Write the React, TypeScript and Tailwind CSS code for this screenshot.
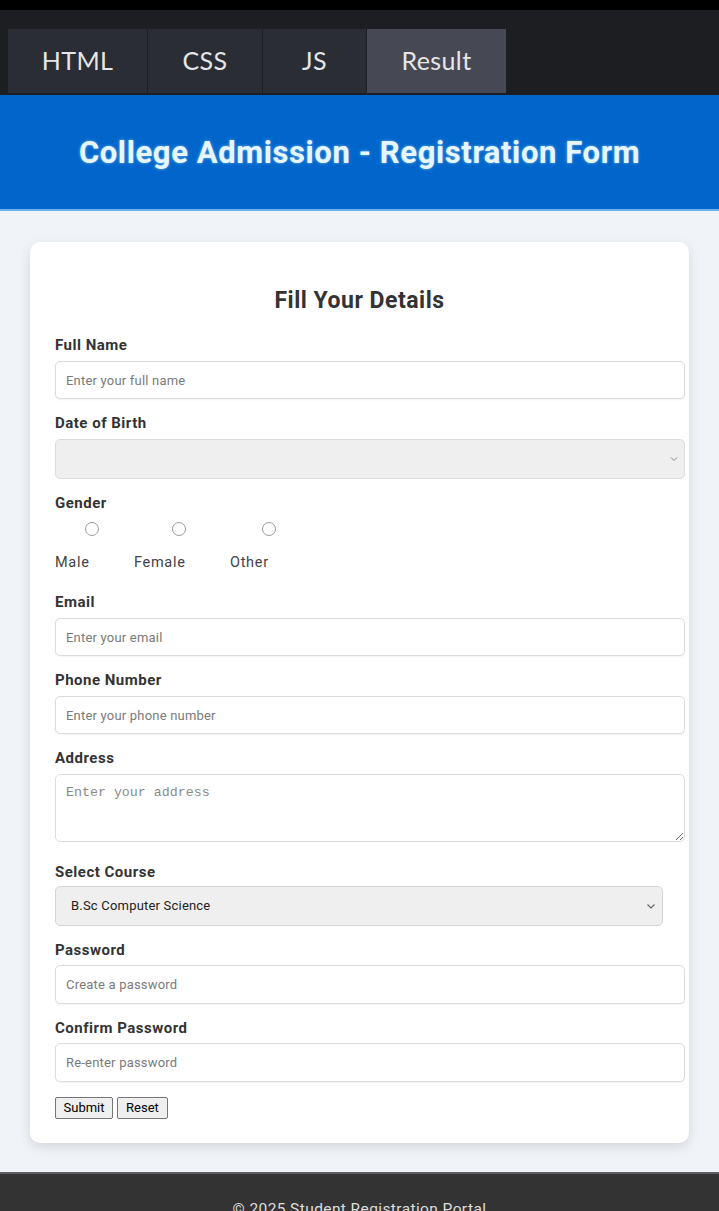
import React from "react";

const Label = ({ children, className = "" }: { children: React.ReactNode; className?: string }) => (
  <div className={`text-[15px] font-bold leading-[17px] tracking-[0.5px] text-[#333] ${className}`}>{children}</div>
);

const TextInput = ({ placeholder, className = "" }: { placeholder: string; className?: string }) => (
  <input
    type="text"
    placeholder={placeholder}
    className={`block h-[38px] w-[630px] rounded-[5px] border border-[#dcdcdc] bg-white px-[10px] text-[13px] tracking-[0.2px] text-[#333] shadow-[0_1px_2px_rgba(0,0,0,0.05)] outline-none placeholder:text-[#7a7a7a] ${className}`}
  />
);

export default function App() {
  return (
    <div className="flex min-h-[1211px] w-[719px] flex-col bg-[#f0f4f8] font-['Roboto','Liberation_Sans',sans-serif]">
      <div className="h-[10px] bg-black" />
      <div className="h-[85px] bg-[#1d1e22] pl-[8px] pt-[19px]">
        <div className="flex h-[64px] font-['Lato','Open_Sans',sans-serif] text-[25px] tracking-[0.4px] text-[#e6e6e6]">
          <div className="flex w-[140px] items-center justify-center border-r border-[#1d1e22] bg-[#2b2d35]">HTML</div>
          <div className="flex w-[115px] items-center justify-center border-r border-[#1d1e22] bg-[#2b2d35]">CSS</div>
          <div className="flex w-[104px] items-center justify-center border-r border-[#1d1e22] bg-[#2b2d35]">JS</div>
          <div className="flex w-[139px] items-center justify-center bg-[#464854]">Result</div>
        </div>
      </div>
      <div className="flex h-[116px] items-center justify-center border-b-2 border-[#6bb2ef] bg-[#0066cc] pt-[3px]">
        <h1 className="text-[31px] font-bold tracking-[0.6px] text-[#e6f6ff] [text-shadow:0_0_3px_rgba(200,240,255,0.6)]">
          College Admission - Registration Form
        </h1>
      </div>
      <div className="px-[30px] pb-[29px] pt-[31px]">
        <div className="rounded-[10px] bg-white px-[25px] pb-[24px] pt-[25px] shadow-[0_4px_12px_rgba(0,0,0,0.12)]">
          <h2 className="mt-[21px] mb-[23px] text-center text-[23px] font-bold leading-[26px] tracking-[0.5px] text-[#333]">Fill Your Details</h2>

          <Label className="mb-[7px]">Full Name</Label>
          <TextInput placeholder="Enter your full name" />

          <Label className="mb-[7px] mt-[16px]">Date of Birth</Label>
          <div className="flex h-[40px] w-[630px] items-center justify-end rounded-[5px] border border-[#dcdcdc] bg-[#efefef] pr-[6px]">
            <svg width="8" height="6" viewBox="0 0 8 6" fill="none">
              <path d="M1 1.5L4 4.5L7 1.5" stroke="#888" strokeWidth="1" />
            </svg>
          </div>

          <Label className="mt-[16px]">Gender</Label>
          <div className="mt-[10px] flex pl-[30px]">
            <div className="h-[14px] w-[14px] rounded-full border border-[#9a9a9a]" />
            <div className="ml-[73px] h-[14px] w-[14px] rounded-full border border-[#9a9a9a]" />
            <div className="ml-[76px] h-[14px] w-[14px] rounded-full border border-[#9a9a9a]" />
          </div>
          <div className="mt-[18px] flex text-[14.5px] leading-[17px] tracking-[0.7px] text-[#444]">
            <div className="w-[79px]">Male</div>
            <div className="w-[96px]">Female</div>
            <div>Other</div>
          </div>

          <Label className="mb-[7px] mt-[23px]">Email</Label>
          <TextInput placeholder="Enter your email" />

          <Label className="mb-[7px] mt-[16px]">Phone Number</Label>
          <TextInput placeholder="Enter your phone number" />

          <Label className="mb-[7px] mt-[16px]">Address</Label>
          <textarea
            placeholder="Enter your address"
            className="block h-[68px] w-[630px] resize rounded-[5px] border border-[#dcdcdc] bg-white px-[10px] pt-[10px] font-['Liberation_Mono','DejaVu_Sans_Mono',monospace] text-[13.3px] leading-[16px] text-[#333] outline-none placeholder:text-[#8a8a8a]"
          />

          <Label className="mb-[5px] mt-[22px]">Select Course</Label>
          <div className="flex h-[40px] w-[608px] items-center justify-between rounded-[5px] border border-[#d4d4d4] bg-[#efefef] pl-[15px] pr-[6px] text-[13px] tracking-[0.2px] text-[#222]">
            <span>B.Sc Computer Science</span>
            <svg width="10" height="7" viewBox="0 0 10 7" fill="none">
              <path d="M1.5 1.5L5 5L8.5 1.5" stroke="#666" strokeWidth="1.2" />
            </svg>
          </div>

          <Label className="mb-[6px] mt-[16px]">Password</Label>
          <TextInput placeholder="Create a password" className="h-[39px]" />

          <Label className="mb-[6px] mt-[16px]">Confirm Password</Label>
          <TextInput placeholder="Re-enter password" className="h-[39px]" />

          <div className="mt-[15px] flex gap-[4px] text-[13px] text-black">
            <button className="h-[22px] w-[58px] rounded-[2px] border border-[#767676] bg-[#efefef] leading-[20px]">Submit</button>
            <button className="h-[22px] w-[51px] rounded-[2px] border border-[#767676] bg-[#efefef] leading-[20px]">Reset</button>
          </div>
        </div>
      </div>
      <div className="grow border-t-2 border-[#5e5e5e] bg-[#333] pt-[26px] text-center text-[15.5px] leading-[18px] tracking-[0.4px] text-[#dedede]">
        © 2025 Student Registration Portal
      </div>
    </div>
  );
}
